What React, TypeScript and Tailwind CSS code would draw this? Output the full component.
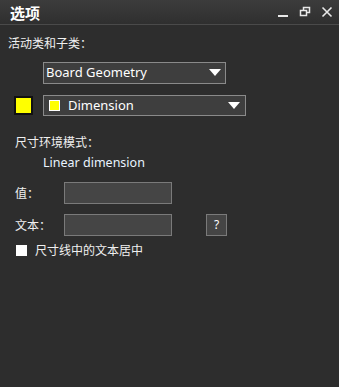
import React from "react";

const cjk = { fontFamily: '"Noto Sans CJK SC", "Noto Sans", sans-serif' };
const lat = { fontFamily: '"Noto Sans", "Noto Sans CJK SC", sans-serif' };

function Arrow() {
  return (
    <svg width="12" height="8" viewBox="0 0 12 8">
      <polygon points="0,0 12,0 6,7" fill="#ffffff" />
    </svg>
  );
}

export default function App() {
  return (
    <div className="w-[339px] h-[387px] bg-[#2d2d2d] text-[#f0f0f0] overflow-hidden" style={cjk}>
      {/* Title bar */}
      <div className="h-[25px] flex items-center justify-between pl-[10px] pr-[6px] bg-gradient-to-b from-[#3c3c3c] to-[#2f2f2f] border-b border-[#4a4a4a]">
        <span className="text-[15px] font-bold text-white leading-none">选项</span>
        <div className="flex items-center gap-[10px]">
          <svg width="12" height="12" viewBox="0 0 12 12">
            <rect x="1" y="9" width="10" height="2" fill="#e8e8e8" />
          </svg>
          <svg width="12" height="12" viewBox="0 0 12 12">
            <rect x="4.5" y="1.5" width="6" height="5" fill="none" stroke="#e8e8e8" strokeWidth="1.5" />
            <rect x="1.5" y="4.5" width="6" height="5" fill="#2f2f2f" stroke="#e8e8e8" strokeWidth="1.5" />
          </svg>
          <svg width="12" height="12" viewBox="0 0 12 12">
            <path d="M1.5 1.5 L10.5 10.5 M10.5 1.5 L1.5 10.5" stroke="#e8e8e8" strokeWidth="1.6" />
          </svg>
        </div>
      </div>

      <div className="pl-[8px] pt-[10px] text-[12px] leading-[16px]">活动类和子类：</div>

      <div className="pl-[43px] mt-[11px]">
        <div className="w-[183px] h-[22px] bg-[#3e3e3e] border border-[#8a8a8a] flex items-center justify-between pl-[2px] pr-[4px]">
          <span className="text-[13px] text-white" style={lat}>Board Geometry</span>
          <Arrow />
        </div>
      </div>

      <div className="flex items-center mt-[11px] pl-[14px]">
        <div className="w-[19px] h-[19px] bg-[#ffff00] border-2 border-[#111]" />
        <div className="ml-[10px] w-[203px] h-[21px] bg-[#3e3e3e] border border-[#8a8a8a] flex items-center justify-between pl-[5px] pr-[5px]">
          <div className="flex items-center">
            <div className="w-[11px] h-[11px] bg-[#ffff00] border border-white" />
            <span className="ml-[8px] text-[13px] text-white" style={lat}>Dimension</span>
          </div>
          <Arrow />
        </div>
      </div>

      <div className="pl-[15px] mt-[18px] text-[12px] leading-[16px]">尺寸环境模式：</div>
      <div className="pl-[43px] mt-[5px] text-[12.5px] leading-[16px] text-[#eaf4ff]" style={lat}>Linear dimension</div>

      <div className="flex items-center mt-[11px] pl-[15px]">
        <span className="w-[49px] text-[12px]">值：</span>
        <div className="w-[108px] h-[22px] bg-[#454545] border border-[#7a7a7a]" />
      </div>

      <div className="flex items-center mt-[10px] pl-[15px]">
        <span className="w-[49px] text-[12px]">文本：</span>
        <div className="w-[108px] h-[22px] bg-[#454545] border border-[#7a7a7a]" />
        <div className="ml-[34px] w-[21px] h-[22px] bg-[#454545] border border-[#7a7a7a] flex items-center justify-center text-[12px] text-white" style={lat}>?</div>
      </div>

      <div className="flex items-center mt-[6px] pl-[16px]">
        <div className="w-[11px] h-[11px] bg-white" />
        <span className="ml-[8px] text-[12px] leading-[16px]">尺寸线中的文本居中</span>
      </div>
    </div>
  );
}
